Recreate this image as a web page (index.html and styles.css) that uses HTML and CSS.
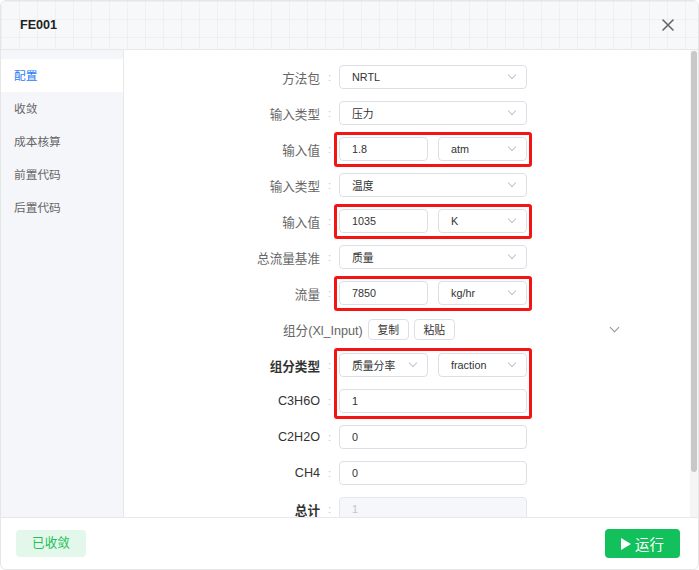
FILE: index.html
```html
<!DOCTYPE html>
<html lang="zh">

<head>
    <meta charset="UTF-8">
    <meta name="viewport" content="width=device-width, initial-scale=1.0">
    <title>FE001</title>
    <link rel="stylesheet" href="styles.css">
</head>

<body>

    <div class="dialog">
        <div class="dialog-header">
            <span class="dialog-title">FE001</span>
            <svg class="close" width="12" height="12" viewBox="0 0 12 12">
                <path d="M1 1 L11 11 M11 1 L1 11" stroke="#666" stroke-width="1.6" stroke-linecap="round"/>
            </svg>
        </div>

        <div class="dialog-body">
            <ul class="side-menu">
                <li class="active">配置</li>
                <li>收敛</li>
                <li>成本核算</li>
                <li>前置代码</li>
                <li>后置代码</li>
            </ul>

            <div class="content">
                <div class="row">
                    <span class="label">方法包</span><span class="sep">:</span>
                    <div class="ctl"><div class="field select">NRTL<i class="chev"></i></div></div>
                </div>
                <div class="row">
                    <span class="label">输入类型</span><span class="sep">:</span>
                    <div class="ctl"><div class="field select">压力<i class="chev"></i></div></div>
                </div>
                <div class="marked">
                    <div class="row">
                        <span class="label">输入值</span><span class="sep">:</span>
                        <div class="ctl">
                            <div class="field">1.8</div>
                            <div class="field select">atm<i class="chev"></i></div>
                        </div>
                    </div>
                </div>
                <div class="row">
                    <span class="label">输入类型</span><span class="sep">:</span>
                    <div class="ctl"><div class="field select">温度<i class="chev"></i></div></div>
                </div>
                <div class="marked">
                    <div class="row">
                        <span class="label">输入值</span><span class="sep">:</span>
                        <div class="ctl">
                            <div class="field">1035</div>
                            <div class="field select">K<i class="chev"></i></div>
                        </div>
                    </div>
                </div>
                <div class="row">
                    <span class="label">总流量基准</span><span class="sep">:</span>
                    <div class="ctl"><div class="field select">质量<i class="chev"></i></div></div>
                </div>
                <div class="marked">
                    <div class="row">
                        <span class="label">流量</span><span class="sep">:</span>
                        <div class="ctl">
                            <div class="field">7850</div>
                            <div class="field select">kg/hr<i class="chev"></i></div>
                        </div>
                    </div>
                </div>

                <div class="row tools">
                    <span class="tools-label">组分(Xl_Input)</span>
                    <button class="small-btn">复制</button>
                    <button class="small-btn">粘贴</button>
                    <i class="chev collapse"></i>
                </div>

                <div class="marked">
                    <div class="row">
                        <span class="label strong">组分类型</span><span class="sep">:</span>
                        <div class="ctl">
                            <div class="field select">质量分率<i class="chev"></i></div>
                            <div class="field select">fraction<i class="chev"></i></div>
                        </div>
                    </div>
                    <div class="row">
                        <span class="label dark">C3H6O</span><span class="sep">:</span>
                        <div class="ctl"><div class="field">1</div></div>
                    </div>
                </div>
                <div class="row">
                    <span class="label dark">C2H2O</span><span class="sep">:</span>
                    <div class="ctl"><div class="field">0</div></div>
                </div>
                <div class="row">
                    <span class="label dark">CH4</span><span class="sep">:</span>
                    <div class="ctl"><div class="field">0</div></div>
                </div>
                <div class="row">
                    <span class="label strong">总计</span><span class="sep">:</span>
                    <div class="ctl"><div class="field disabled">1</div></div>
                </div>
            </div>

            <div class="scroll-track"><div class="scroll-thumb"></div></div>
        </div>

        <div class="dialog-footer">
            <span class="status">已收敛</span>
            <button class="run-btn">
                <svg width="10" height="12" viewBox="0 0 10 12"><polygon points="0,0 10,6 0,12" fill="#fff"/></svg>
                运行
            </button>
        </div>
    </div>

</body>

</html>
```

FILE: styles.css
```css
*,
*::before,
*::after {
    box-sizing: border-box;
}

body {
    margin: 0;
    background-color: #ffffff;
    font-family: "Liberation Sans", "Noto Sans CJK SC", sans-serif;
    color: #333;
}

.dialog {
    width: 699px;
    height: 570px;
    display: flex;
    flex-direction: column;
    border: 1px solid #e6e6e6;
    border-radius: 6px;
    overflow: hidden;
    background-color: #fff;
}

/* Header with faint grid */
.dialog-header {
    height: 49px;
    flex: none;
    display: flex;
    align-items: center;
    justify-content: space-between;
    padding: 0 24px 0 19px;
    border-bottom: 1px solid #e8e8e8;
    background-color: #f7f8fa;
    background-image:
        linear-gradient(rgba(0, 0, 0, 0.03) 1px, transparent 1px),
        linear-gradient(90deg, rgba(0, 0, 0, 0.03) 1px, transparent 1px);
    background-size: 18px 18px;
}

.dialog-title {
    font-size: 12.6px;
    font-weight: bold;
    color: #222;
}

.close {
    display: block;
}

.dialog-body {
    flex: 1;
    display: flex;
    min-height: 0;
}

/* Left menu */
.side-menu {
    width: 123px;
    flex: none;
    margin: 0;
    padding: 9px 0 0;
    list-style: none;
    background-color: #f5f6fa;
    border-right: 1px solid #e8e8e8;
}

.side-menu li {
    height: 33px;
    line-height: 33px;
    padding-left: 13px;
    font-size: 11.7px;
    color: #666;
}

.side-menu li.active {
    background-color: #fff;
    color: #2a7bf6;
}

/* Form area */
.content {
    flex: 1;
    overflow: hidden;
    padding: 9px 0 42px;
}

/* Scrollbar look-alike */
.scroll-track {
    width: 8px;
    flex: none;
    padding: 1px;
    background-color: #f5f5f5;
}

.scroll-thumb {
    height: 421px;
    border-radius: 3px;
    background-color: #c8c8c8;
}

.row {
    height: 36px;
    display: flex;
    align-items: center;
}

.label {
    width: 196px;
    flex: none;
    text-align: right;
    font-size: 12.6px;
    color: #666;
}

.label.dark {
    color: #333;
}

.label.strong {
    color: #333;
    font-weight: bold;
}

.sep {
    width: 19px;
    flex: none;
    text-align: center;
    font-size: 11px;
    color: #c0c4cc;
}

.ctl {
    width: 188px;
    display: flex;
    gap: 10px;
}

.field {
    flex: 1;
    height: 24px;
    display: flex;
    align-items: center;
    padding: 0 11px 0 12px;
    border: 1px solid #dcdfe6;
    border-radius: 4px;
    background-color: #fff;
    font-size: 10.8px;
    color: #333;
    white-space: nowrap;
}

.field.disabled {
    background-color: #f5f7fa;
    border-color: #e4e7ed;
    color: #c0c4cc;
}

/* Chevron drawn with borders */
.chev {
    width: 6px;
    height: 6px;
    margin-left: auto;
    margin-top: -4px;
    border-right: 1px solid #c0c4cc;
    border-bottom: 1px solid #c0c4cc;
    transform: rotate(45deg);
}

/* Red annotation boxes */
.marked {
    position: relative;
}

.marked::after {
    content: "";
    position: absolute;
    left: 210px;
    width: 198px;
    top: 1px;
    bottom: 0;
    border: 3px solid #f41414;
    border-radius: 3px;
    pointer-events: none;
}

/* Component toolbar row */
.row.tools {
    padding-left: 159px;
    gap: 5px;
}

.tools-label {
    font-size: 12.6px;
    color: #666;
}

.small-btn {
    width: 41px;
    height: 21px;
    padding: 0;
    border: 1px solid #dcdfe6;
    border-radius: 4px;
    background-color: #fff;
    font-family: inherit;
    font-size: 10.8px;
    color: #333;
}

.chev.collapse {
    width: 7px;
    height: 7px;
    margin-right: 72px;
    border-color: #909399;
}

/* Footer */
.dialog-footer {
    height: 52px;
    flex: none;
    display: flex;
    align-items: center;
    justify-content: space-between;
    padding: 0 18px 0 15px;
    border-top: 1px solid #e8e8e8;
}

.status {
    width: 70px;
    height: 27px;
    line-height: 27px;
    text-align: center;
    border-radius: 4px;
    background-color: #e4f7eb;
    color: #1ec25a;
    font-size: 12.6px;
}

.run-btn {
    width: 75px;
    height: 29px;
    display: flex;
    align-items: center;
    justify-content: center;
    gap: 4px;
    padding: 0;
    border: none;
    border-radius: 4px;
    background-color: #12c15b;
    color: #fff;
    font-family: inherit;
    font-size: 14.4px;
}
```
